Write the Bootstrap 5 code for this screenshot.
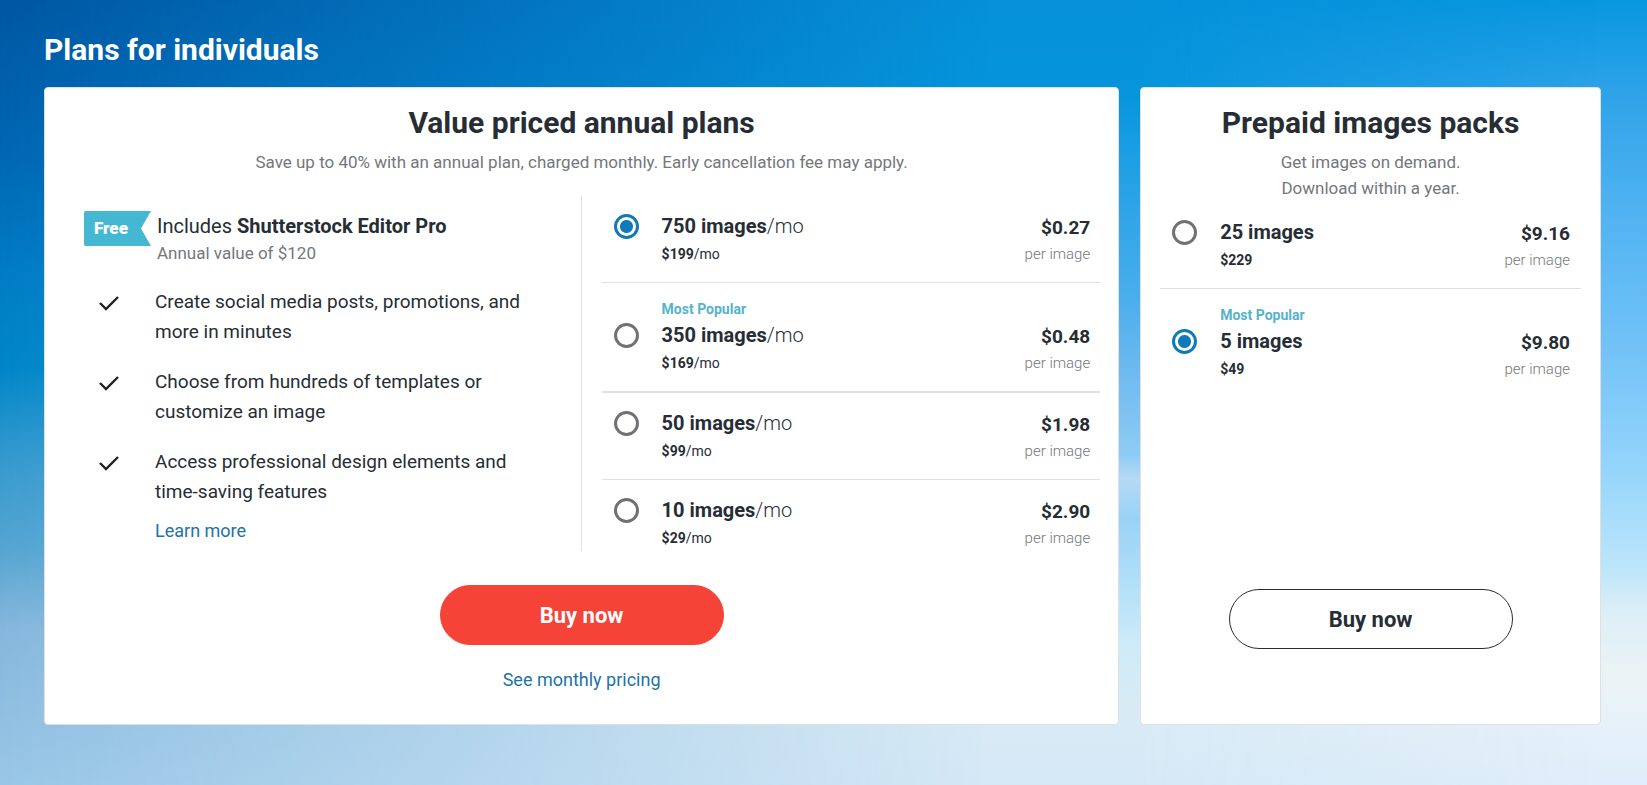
<!DOCTYPE html>
<html lang="en">
<head>
<meta charset="utf-8">
<meta name="viewport" content="width=device-width, initial-scale=1">
<title>Plans for individuals</title>
<link rel="stylesheet" href="https://cdn.jsdelivr.net/npm/bootstrap@5.3.0/dist/css/bootstrap.min.css">
<style>
  :root {
    --ink: #262d35;
    --muted-ink: #74777b;
    --teal: #44b8d3;
    --blue: #1079b8;
    --rule: #e0e0e0;
  }
  body {
    font-family: Roboto, "Liberation Sans", sans-serif;
    color: var(--ink);
  }

  /* Sky: three vertical gradients blended from left to right */
  .sky {
    position: relative;
    isolation: isolate;
    padding: 32px 46px 32px 44px;
    background: linear-gradient(#0797e0, #2fa3e8 12%, #4cb1f0 25%, #74c3f8 45%, #95d5fb 60%, #bce5fb 72%, #dceff6 78%, #ecf3f6 86%, #dfeefb);
  }
  .sky::before, .sky::after {
    content: "";
    position: absolute;
    inset: 0;
  }
  .sky::before {
    z-index: -2;
    background: linear-gradient(#0690da, #0595dc 12%, #1d9fe4 20%, #4aaeec 38%, #69b8ef 46%, #80c3f2 53%, #8dccf4 58%, #b6d9f5 61%, #99d2f6 66%, #b4e0f9 75%, #cdebf8 82%, #d8ebf5 90%, #d5e8f6);
    -webkit-mask-image: linear-gradient(to right, #000 69%, transparent 97%);
    mask-image: linear-gradient(to right, #000 69%, transparent 97%);
  }
  .sky::after {
    z-index: -1;
    background: linear-gradient(#0056a2, #0067b3 20%, #007cc4 35%, #0086c8 47%, #3398cd 58%, #55a5d1 70%, #85b6dc 80%, #98c6e6);
    -webkit-mask-image: linear-gradient(to right, #000, transparent 60%);
    mask-image: linear-gradient(to right, #000, transparent 60%);
  }

  .page-title { font-size: 30px; line-height: 36px; margin-bottom: 19px; }

  .plans { display: grid; grid-template-columns: 7fr 3fr; gap: 21px; }
  .plan {
    --bs-card-border-color: var(--rule);
    --bs-card-border-radius: 4px;
    color: var(--ink);
    padding-top: 18px;
  }
  .plan-title { font-size: 30px; line-height: 34px; margin-bottom: 9px; }
  .plan-lead { font-size: 17px; line-height: 26px; margin-bottom: 1px; color: var(--muted-ink); }

  .editor { padding: 15px 36px 4px 39px; border-right: 1px solid var(--rule); }
  .ribbon {
    width: 67px;
    height: 35px;
    padding-left: 10px;
    margin-right: 6px;
    font-size: 17px;
    line-height: 35px;
    font-weight: 900;
    color: #fff;
    background: var(--teal);
    border-radius: 2px 0 0 2px;
    clip-path: polygon(0 0, 100% 0, 57px 50%, 100% 100%, 0 100%);
  }
  .editor-name { font-size: 20px; line-height: 30px; }
  .editor-value { font-size: 17px; line-height: 24px; color: var(--muted-ink); }
  .perks { margin: 22px 0 9px; padding-left: 15px; font-size: 19px; line-height: 30px; gap: 20px; }
  .perks li { gap: 36px; }
  .perks svg { margin-top: 9px; }
  .text-link { color: #2272a8; text-decoration: none; font-size: 18px; line-height: 30px; }
  .text-link:hover { text-decoration: underline; }
  .learn { margin-left: 71px; }

  .options { padding: 0 18px 0 20px; }
  .option { padding: 15px 10px 15px 12px; border-bottom: 1px solid var(--rule); cursor: pointer; }
  .option:last-child { border-bottom: 0; padding-bottom: 0; }
  .option-popular:not(:last-child) { border-bottom-width: 2px; }
  .packs { padding: 0 19px; }
  .packs .option { padding-right: 11px; }
  .option .form-check-input {
    width: 25px;
    height: 25px;
    margin: 0 23px 28px 0;
    border: 3px solid #6f7175;
    background: #fff;
  }
  .option .form-check-input:checked {
    border-color: var(--blue);
    background: radial-gradient(circle, var(--blue) 6px, #fff 7px);
  }
  .tag-popular { font-size: 14px; line-height: 22px; color: #55b3cb; }
  .amount { font-size: 20px; line-height: 30px; }
  .fee { font-size: 14px; line-height: 26px; }
  .price { font-size: 19px; line-height: 34px; }
  .unit { font-size: 15px; line-height: 18px; padding-bottom: 4px; color: var(--muted-ink); }
  .thin { font-weight: 300; }

  .buy {
    --bs-btn-font-size: 22px;
    --bs-btn-font-weight: 700;
    --bs-btn-border-radius: 30px;
    width: 284px;
    height: 60px;
  }
  .buy-primary {
    --bs-btn-color: #fff;
    --bs-btn-bg: #f54437;
    --bs-btn-border-color: #f54437;
    --bs-btn-hover-color: #fff;
    --bs-btn-hover-bg: #dd3a2e;
    margin-top: 34px;
  }
  .buy-outline {
    --bs-btn-color: var(--ink);
    --bs-btn-border-color: var(--ink);
    --bs-btn-hover-color: #fff;
    --bs-btn-hover-bg: var(--ink);
    margin-bottom: 75px;
  }
  .monthly { margin: 20px 0 29px; }

  @media (max-width: 1100px) {
    .plans { grid-template-columns: 1fr; }
    .buy-outline { margin-top: 35px !important; }
  }
  @media (max-width: 767px) {
    .sky { padding-left: 16px; padding-right: 16px; }
    .editor { border-right: 0; padding-left: 16px; padding-right: 16px; }
  }
</style>
</head>
<body>
<main class="sky min-vh-100">
  <h1 class="page-title fw-bold text-white">Plans for individuals</h1>

  <div class="plans">
    <section class="card plan">
      <h2 class="plan-title fw-bold text-center">Value priced annual plans</h2>
      <p class="plan-lead text-center">Save up to 40% with an annual plan, charged monthly. Early cancellation fee may apply.</p>

      <div class="row g-0 pt-1 mt-3">
        <div class="col-12 col-md-6 editor">
          <div class="d-flex align-items-start">
            <div class="ribbon flex-shrink-0">Free</div>
            <div>
              <div class="editor-name">Includes <strong>Shutterstock Editor Pro</strong></div>
              <div class="editor-value">Annual value of $120</div>
            </div>
          </div>
          <ul class="perks list-unstyled d-flex flex-column">
            <li class="d-flex align-items-start">
              <svg class="flex-shrink-0" width="20" height="15" viewBox="0 0 20 15" fill="none" stroke="#1c1f24" stroke-width="2.4" aria-hidden="true"><path d="M1 7l6 6L19 1"/></svg>
              <span>Create social media posts, promotions, and more in minutes</span>
            </li>
            <li class="d-flex align-items-start">
              <svg class="flex-shrink-0" width="20" height="15" viewBox="0 0 20 15" fill="none" stroke="#1c1f24" stroke-width="2.4" aria-hidden="true"><path d="M1 7l6 6L19 1"/></svg>
              <span>Choose from hundreds of templates or customize an image</span>
            </li>
            <li class="d-flex align-items-start">
              <svg class="flex-shrink-0" width="20" height="15" viewBox="0 0 20 15" fill="none" stroke="#1c1f24" stroke-width="2.4" aria-hidden="true"><path d="M1 7l6 6L19 1"/></svg>
              <span>Access professional design elements and time-saving features</span>
            </li>
          </ul>
          <a class="text-link learn d-inline-block" href="#">Learn more</a>
        </div>

        <div class="col-12 col-md-6 options">
          <label class="option d-flex align-items-end">
            <input class="form-check-input flex-shrink-0" type="radio" name="annual" checked>
            <span class="flex-grow-1">
              <span class="amount d-block"><b>750 images</b><span class="thin">/mo</span></span>
              <span class="fee d-block"><b>$199</b>/mo</span>
            </span>
            <span class="text-end">
              <b class="price d-block">$0.27</b>
              <span class="unit thin d-block">per image</span>
            </span>
          </label>
          <label class="option option-popular d-flex align-items-end">
            <input class="form-check-input flex-shrink-0" type="radio" name="annual">
            <span class="flex-grow-1">
              <b class="tag-popular d-block">Most Popular</b>
              <span class="amount d-block"><b>350 images</b><span class="thin">/mo</span></span>
              <span class="fee d-block"><b>$169</b>/mo</span>
            </span>
            <span class="text-end">
              <b class="price d-block">$0.48</b>
              <span class="unit thin d-block">per image</span>
            </span>
          </label>
          <label class="option d-flex align-items-end">
            <input class="form-check-input flex-shrink-0" type="radio" name="annual">
            <span class="flex-grow-1">
              <span class="amount d-block"><b>50 images</b><span class="thin">/mo</span></span>
              <span class="fee d-block"><b>$99</b>/mo</span>
            </span>
            <span class="text-end">
              <b class="price d-block">$1.98</b>
              <span class="unit thin d-block">per image</span>
            </span>
          </label>
          <label class="option d-flex align-items-end">
            <input class="form-check-input flex-shrink-0" type="radio" name="annual">
            <span class="flex-grow-1">
              <span class="amount d-block"><b>10 images</b><span class="thin">/mo</span></span>
              <span class="fee d-block"><b>$29</b>/mo</span>
            </span>
            <span class="text-end">
              <b class="price d-block">$2.90</b>
              <span class="unit thin d-block">per image</span>
            </span>
          </label>
        </div>
      </div>

      <div class="d-flex flex-column align-items-center">
        <button type="button" class="btn buy buy-primary">Buy now</button>
        <a class="text-link monthly" href="#">See monthly pricing</a>
      </div>
    </section>

    <section class="card plan">
      <h2 class="plan-title fw-bold text-center">Prepaid images packs</h2>
      <p class="plan-lead text-center">Get images on demand.<br>Download within a year.</p>

      <div class="options packs">
        <label class="option d-flex align-items-end">
          <input class="form-check-input flex-shrink-0" type="radio" name="pack">
          <span class="flex-grow-1">
            <b class="amount d-block">25 images</b>
            <b class="fee d-block">$229</b>
          </span>
          <span class="text-end">
            <b class="price d-block">$9.16</b>
            <span class="unit thin d-block">per image</span>
          </span>
        </label>
        <label class="option option-popular d-flex align-items-end">
          <input class="form-check-input flex-shrink-0" type="radio" name="pack" checked>
          <span class="flex-grow-1">
            <b class="tag-popular d-block">Most Popular</b>
            <b class="amount d-block">5 images</b>
            <b class="fee d-block">$49</b>
          </span>
          <span class="text-end">
            <b class="price d-block">$9.80</b>
            <span class="unit thin d-block">per image</span>
          </span>
        </label>
      </div>

      <button type="button" class="btn buy buy-outline align-self-center mt-auto">Buy now</button>
    </section>
  </div>
</main>
<script src="https://cdn.jsdelivr.net/npm/bootstrap@5.3.0/dist/js/bootstrap.bundle.min.js"></script>
</body>
</html>
